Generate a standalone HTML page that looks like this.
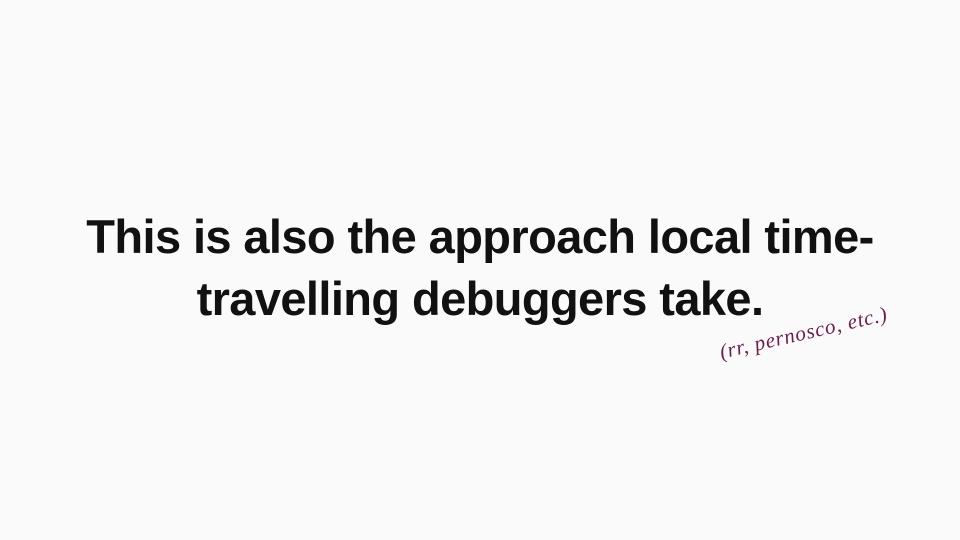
<!DOCTYPE html>
<html><head><style>
html,body{margin:0;padding:0}
body{width:960px;height:540px;background:#fafafa;position:relative;overflow:hidden}
.main{position:absolute;left:0;width:960px;top:206px;text-align:center;font-family:"Liberation Sans",sans-serif;font-weight:bold;font-size:47px;line-height:62px;color:#111;letter-spacing:-0.6px}
.note{position:absolute;left:720px;top:340px;font-family:"Liberation Serif",serif;font-style:italic;font-size:21px;color:#6e1b4a;transform:rotate(-13deg);transform-origin:left center;white-space:nowrap;letter-spacing:0.8px}
</style></head><body>
<div class="main">This is also the approach local time-<br>travelling debuggers take.</div>
<div class="note">(rr, pernosco, etc.)</div>
</body></html>
